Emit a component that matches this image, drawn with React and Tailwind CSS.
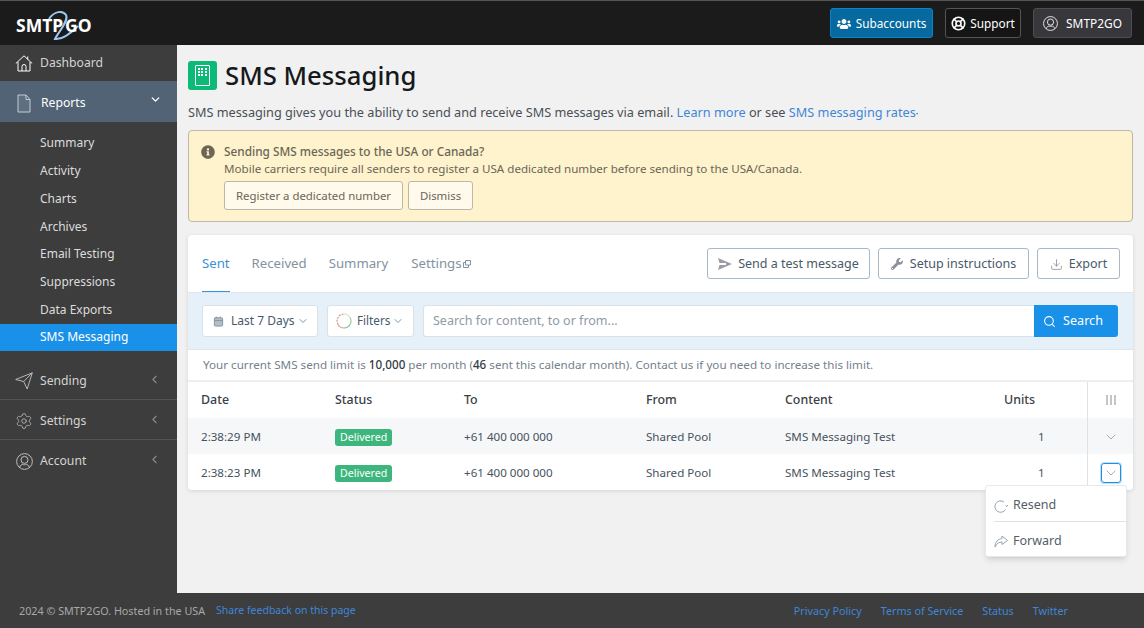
import { ChevronDown, ChevronLeft, Settings, Calendar, Search, Download, LifeBuoy } from 'lucide-react';
import { FaUsers, FaWrench, FaInfoCircle } from 'react-icons/fa';

function Logo() {
  return (
    <div className="relative w-[90px] h-[40px]">
      <span className="absolute left-0 top-[11px] text-[17.5px] leading-[22px] font-bold text-white">SMTP</span>
      <svg className="absolute left-[32px] top-[7px]" width="40" height="32" viewBox="0 0 40 32" fill="none">
        <path d="M1 9 C6 1 15 0 18 5 C21 11 11 21 7 29 C14 30 24 22 30 16" stroke="#9cc7f2" strokeWidth="2" />
      </svg>
      <span className="absolute left-[49px] top-[11px] text-[17.5px] leading-[22px] font-bold text-white">GO</span>
    </div>
  );
}

function UserCircle({ size = 16, className }) {
  return (
    <svg width={size} height={size} viewBox="0 0 16 16" fill="none" stroke="currentColor" strokeWidth="0.9" className={className}>
      <circle cx="8" cy="8" r="7.400" />
      <circle cx="8" cy="6.500" r="3.300" />
      <path d="M3.500 13.500c.5-2 2-2.700 2.800-2.800 1.100.5 2.300.5 3.400 0 .8.100 2.300.8 2.800 2.800" />
    </svg>
  );
}

function TopBar() {
  return (
    <header className="h-[45px] bg-[#1b1b1b] border-t border-[#555] flex items-center pl-[16px] pr-[12px]">
      <Logo />
      <div className="ml-auto flex items-center">
        <button className="h-[30px] w-[103px] pt-[1px] rounded-[3px] bg-[#06699f] border border-[#0a84c4] text-white text-[11.8px] flex items-center justify-center gap-[5px]">
          <FaUsers size={14} />Subaccounts
        </button>
        <button className="ml-[12px] h-[30px] w-[76px] pt-[1px] rounded-[3px] bg-[#151515] border border-[#555] text-white text-[11.8px] flex items-center justify-center gap-[4px]">
          <LifeBuoy size={15} strokeWidth={2.6} />Support
        </button>
        <button className="ml-[12px] h-[30px] w-[99px] pt-[1px] rounded-[3px] bg-[#38383c] border border-[#4e4e52] text-white text-[11.9px] flex items-center justify-center gap-[8px]">
          <UserCircle size={15} />SMTP2GO
        </button>
      </div>
    </header>
  );
}

const subItems = ['Summary', 'Activity', 'Charts', 'Archives', 'Email Testing', 'Suppressions', 'Data Exports'];

function PlaneOutline({ className }) {
  return (
    <svg width="18" height="18" viewBox="0 0 18 18" fill="none" stroke="currentColor" strokeWidth="0.9" strokeLinejoin="round" className={className}>
      <path d="M.7 7.500 17.300.800 12.200 17 8.700 9.500z" />
      <path d="M17.300.800 8.700 9.500" />
    </svg>
  );
}

function GearIcon({ className }) {
  return <Settings size={18} strokeWidth={1} className={className} />;
}

function AccountIcon({ className }) {
  return <UserCircle size={17} className={className} />;
}

function SideRow({ icon: Icon, label, border }) {
  return (
    <div className={`h-[40px] pt-[3px] flex items-center pl-[15px] pr-[16px] text-[#d4d4d4] text-[12.2px] ${border ? 'border-b border-[#525252]' : ''}`}>
      <div className="w-[18px] flex justify-center"><Icon className="text-[#c4c4c4]" /></div>
      <span className="ml-[7px]">{label}</span>
      <ChevronLeft size={13} className="ml-auto mb-[3px] text-[#8a8a8a]" />
    </div>
  );
}

function Sidebar() {
  return (
    <aside className="w-[177px] shrink-0 bg-[#3d3d3d] flex flex-col">
      <div className="h-[36px] flex items-center pl-[15px] text-[#d4d4d4] text-[12.2px]">
        <svg width="18" height="17" viewBox="0 0 18 17" fill="none" stroke="white" strokeWidth="1" strokeLinejoin="round">
          <path d="M.8 8.500 9 .8l8.200 7.700M3 7v9h12V7M12.700 1.500v3M7 16v-4.500a2 2 0 0 1 4 0V16" />
        </svg>
        <span className="ml-[7px]">Dashboard</span>
      </div>
      <div className="h-[41px] bg-[#526376] flex items-center pl-[17px] pr-[15px] text-white text-[12.2px]">
        <svg width="14" height="19" viewBox="0 0 14 19" fill="#5f6f80" stroke="#c4cad2" strokeWidth="1" strokeLinejoin="round" className="mt-[3px]">
          <path d="M1 1h8l4 4.500V18H1zM9 1v4.500h4" />
        </svg>
        <span className="ml-[10px] mt-[4px]">Reports</span>
        <ChevronDown size={13} strokeWidth={2.5} className="ml-auto mb-[4px]" />
      </div>
      <div className="pt-[7.3px]">
        {subItems.map((s) => (
          <div key={s} className="h-[27.8px] flex items-center pl-[40px] text-[#dcdcdc] text-[12px]">{s}</div>
        ))}
        <div className="h-[27px] flex items-center pl-[40px] text-white text-[12px] bg-[#1a91e8]">SMS Messaging</div>
      </div>
      <div className="pt-[9px]">
        <SideRow icon={PlaneOutline} label="Sending" border />
        <SideRow icon={GearIcon} label="Settings" border />
        <SideRow icon={AccountIcon} label="Account" />
      </div>
    </aside>
  );
}

function Notice() {
  return (
    <div className="mt-[8px] h-[92px] bg-[#fef3cd] border border-[#bcb8a8] rounded-[4px] flex pl-[12px] pt-[12px] text-[#6b6656] text-[11.6px]">
      <FaInfoCircle size={14} className="mt-[2px] text-[#6b6656]" />
      <div className="ml-[9px]">
        <div className="font-medium leading-[17px] text-[11.8px]">Sending SMS messages to the USA or Canada?</div>
        <div className="leading-[17px]">Mobile carriers require all senders to register a USA dedicated number before sending to the USA/Canada.</div>
        <div className="flex gap-[5px] mt-[4px] text-[11.4px]">
          <button className="h-[29px] w-[179px] bg-[#fffaeb] border border-[#bcb8a8] rounded-[3px]">Register a dedicated number</button>
          <button className="h-[29px] w-[65px] bg-[#fffaeb] border border-[#bcb8a8] rounded-[3px]">Dismiss</button>
        </div>
      </div>
    </div>
  );
}

function OutlineBtn({ children, label, w, gap }) {
  return (
    <button className={`h-[31px] ${w} pt-[1px] border border-[#a9b8c6] rounded-[3px] bg-white text-[#495a68] text-[12.5px] flex items-center justify-center ${gap}`}>
      {children}
      {label}
    </button>
  );
}

function Tabs() {
  return (
    <div className="h-[57px] flex items-center pl-[14px] pr-[13px]">
      <div className="flex h-full items-stretch text-[13.2px] text-[#8492a0] gap-[22px]">
        <div className="flex items-center text-[#3b8fd9] border-b border-[#3b8fd9] pt-[1px]">Sent</div>
        <div className="flex items-center">Received</div>
        <div className="flex items-center">Summary</div>
        <div className="flex items-center gap-[2px] pl-[1px]">Settings
          <svg width="8" height="8" viewBox="0 0 8 8" fill="none" stroke="#8492a0" strokeWidth="1"><path d="M2.500.5h5v4.500h-5zM2.500 2.500h-2v5h5V5" /></svg>
        </div>
      </div>
      <div className="ml-auto flex gap-[8px]">
        <OutlineBtn label="Send a test message" w="w-[163px]" gap="gap-[6px]">
          <svg width="14" height="12" viewBox="0 0 14 12" fill="#9a9ea4"><path d="M0 0 14 6 0 12l1.500-5H8V5H1.500z" /></svg>
        </OutlineBtn>
        <OutlineBtn label="Setup instructions" w="w-[151px]" gap="gap-[7px]">
          <FaWrench size={12} className="text-[#8b8f9c]" />
        </OutlineBtn>
        <OutlineBtn label="Export" w="w-[83px]" gap="gap-[6px]">
          <Download size={13} strokeWidth={1.5} className="text-[#8b8f96]" />
        </OutlineBtn>
      </div>
    </div>
  );
}

function FilterBar() {
  return (
    <div className="h-[58px] bg-[#e6f0f9] border-y border-[#dbe6ef] flex items-center pl-[14px] pr-[15px] text-[12px] text-[#47596a]">
      <button className="h-[32px] w-[116px] bg-white border border-[#d9e2ea] rounded-[3px] flex items-center pl-[10px] gap-[7px]">
        <Calendar size={11} className="text-[#8492a0]" fill="#b5bdc6" />Last 7 Days<ChevronDown size={12} className="text-[#8492a0] -ml-[5px]" />
      </button>
      <button className="ml-[9px] h-[32px] w-[87px] bg-white border border-[#d9e2ea] rounded-[3px] flex items-center pl-[8px] gap-[5px] text-[11.7px]">
        <svg width="16" height="16" viewBox="0 0 16 16" fill="none" strokeWidth="1.2">
          <path d="M8 1a7 7 0 0 1 6 3.500" stroke="#d9d9d9" />
          <path d="M14 4.500a7 7 0 0 1 0 7" stroke="#9ccc9c" />
          <path d="M14 11.500a7 7 0 0 1-6 3.500" stroke="#6fbf9a" />
          <path d="M8 15a7 7 0 0 1-6-3.500" stroke="#e0a080" />
          <path d="M2 11.500a7 7 0 0 1 6-10.500" stroke="#c99" strokeDasharray="2 1" />
        </svg>
        Filters<ChevronDown size={12} className="text-[#8492a0] -ml-[3px]" />
      </button>
      <div className="ml-[9px] flex-1 h-[32px] flex">
        <div className="flex-1 bg-white border border-[#d9e2ea] border-r-0 rounded-l-[3px] flex items-center pl-[9px] text-[#8f9aa5] text-[12.5px]">Search for content, to or from...</div>
        <button className="w-[84px] pr-[6px] bg-[#1a91e8] text-white rounded-r-[3px] flex items-center justify-center gap-[7px] text-[12.6px]">
          <Search size={13} />Search
        </button>
      </div>
    </div>
  );
}

const rows = [
  { time: '2:38:29 PM', bg: 'bg-[#f6f7f9]', open: false },
  { time: '2:38:23 PM', bg: 'bg-white', open: true },
];

function Table() {
  return (
    <div className="text-[11.6px] text-[#47525c]">
      <div className="h-[36px] flex items-center font-medium text-[#3a4148] text-[12.4px]">
        <div className="w-[147px] pl-[13px]">Date</div>
        <div className="w-[129px]">Status</div>
        <div className="w-[182px]">To</div>
        <div className="w-[139px]">From</div>
        <div className="w-[219px]">Content</div>
        <div className="w-[83px]">Units</div>
        <div className="flex-1 self-stretch border-l border-[#dfe3e7] flex items-center justify-center">
          <div className="flex gap-[2px]">
            <div className="w-[2px] h-[10px] bg-[#c2c6ca]" />
            <div className="w-[2px] h-[10px] bg-[#c2c6ca]" />
            <div className="w-[2px] h-[10px] bg-[#c2c6ca]" />
          </div>
        </div>
      </div>
      {rows.map((r) => (
        <div key={r.time} className={`h-[36px] pt-[2px] flex items-center ${r.bg}`}>
          <div className="w-[147px] pl-[13px]">{r.time}</div>
          <div className="w-[129px]">
            <span className="inline-block bg-[#3cb67c] text-white text-[10.6px] leading-[17px] px-[5px] rounded-[3px]">Delivered</span>
          </div>
          <div className="w-[182px]">+61 400 000 000</div>
          <div className="w-[139px]">Shared Pool</div>
          <div className="w-[219px]">SMS Messaging Test</div>
          <div className="w-[83px] pl-[34px]">1</div>
          <div className="flex-1 self-stretch -mt-[2px] border-l border-[#dfe3e7] flex items-center justify-center">
            <div className={`w-[20px] h-[20px] mt-[2px] rounded-[3px] flex items-center justify-center ${r.open ? 'border border-[#1a91e8] ring-1 ring-[#bfe0fa]' : ''}`}>
              <ChevronDown size={16} strokeWidth={1} className="text-[#7b8690]" />
            </div>
          </div>
        </div>
      ))}
    </div>
  );
}

function ActionMenu() {
  return (
    <div className="absolute left-[985px] top-[485px] w-[142px] h-[72px] bg-white rounded-[3px] border border-[#e6e9ec] shadow-md text-[12.5px] text-[#555e67]">
      <div className="h-[35px] pt-[4px] flex items-center pl-[8px] gap-[5px]">
        <svg width="14" height="14" viewBox="0 0 14 14" fill="none" stroke="#9aa3ac" strokeWidth="1">
          <path d="M11.500 10.500A5.700 5.700 0 1 1 10 3M11.500 6.500l1.500 1 1-1.500" />
        </svg>
        Resend
      </div>
      <div className="h-px bg-[#dfe3e7] ml-[8px]" />
      <div className="h-[34px] pt-[4px] flex items-center pl-[8px] gap-[5px]">
        <svg width="14" height="13" viewBox="0 0 14 13" fill="none" stroke="#9aa3ac" strokeWidth="1" strokeLinejoin="round">
          <path d="M8 1l5.500 4.500L8 9.500V7C5 7 2.500 8.500 1 12c0-5 3-8 7-8.500z" />
        </svg>
        Forward
      </div>
    </div>
  );
}

function Footer() {
  return (
    <footer className="h-[35px] pt-[1px] bg-[#3d3d3d] flex items-center pl-[19px] text-[10.75px] text-[#a8a8a8]">
      <span>2024 © SMTP2GO. Hosted in the USA</span>
      <span className="ml-[11px] text-[#3f86d8] text-[10.5px]">Share feedback on this page</span>
      <div className="ml-auto mr-[76px] flex gap-[19px] text-[#3f86d8]">
        <span>Privacy Policy</span>
        <span>Terms of Service</span>
        <span>Status</span>
        <span>Twitter</span>
      </div>
    </footer>
  );
}

export default function App() {
  return (
    <div className="relative h-[628px] w-[1144px] overflow-hidden flex flex-col bg-[#f1f1f1]" style={{ fontFamily: '"Noto Sans", sans-serif' }}>
      <TopBar />
      <div className="flex flex-1 min-h-0">
        <Sidebar />
        <main className="flex-1 pl-[11px] pr-[11px] pt-[16px]">
          <div className="flex items-center h-[29px]">
            <div className="w-[29px] h-[29px] rounded-[3px] bg-[#0cb976] flex items-center justify-center">
              <div className="w-[15px] h-[21px] border border-white rounded-[1px] grid grid-cols-3 gap-[1px] p-[2px] content-start">
                {[...Array(9)].map((_, i) => <div key={i} className="w-[2px] h-[2px] bg-white" />)}
              </div>
            </div>
            <h1 className="ml-[8px] text-[25.7px] font-medium text-[#16191c] leading-[29px]">SMS Messaging</h1>
          </div>
          <p className="mt-[13px] text-[12.7px] leading-[18px] text-[#4a4f55]">
            SMS messaging gives you the ability to send and receive SMS messages via email. <span className="text-[#3f86d8]">Learn more</span> or see <span className="text-[#3f86d8]">SMS messaging rates</span><span className="text-[10px]">·</span>
          </p>
          <Notice />
          <section className="mt-[13px] bg-white rounded-[4px] shadow-[0_1px_4px_rgba(0,0,0,0.12)] overflow-hidden">
            <Tabs />
            <FilterBar />
            <div className="h-[32px] flex items-center pl-[15px] border-b-2 border-[#eeeeee] text-[11.65px] text-[#76818b]">
              <span>Your current SMS send limit is <b className="font-medium text-[#33393f]">10,000</b> per month (<b className="font-medium text-[#33393f]">46</b> sent this calendar month). Contact us if you need to increase this limit.</span>
            </div>
            <Table />
          </section>
        </main>
      </div>
      <Footer />
      <ActionMenu />
    </div>
  );
}
